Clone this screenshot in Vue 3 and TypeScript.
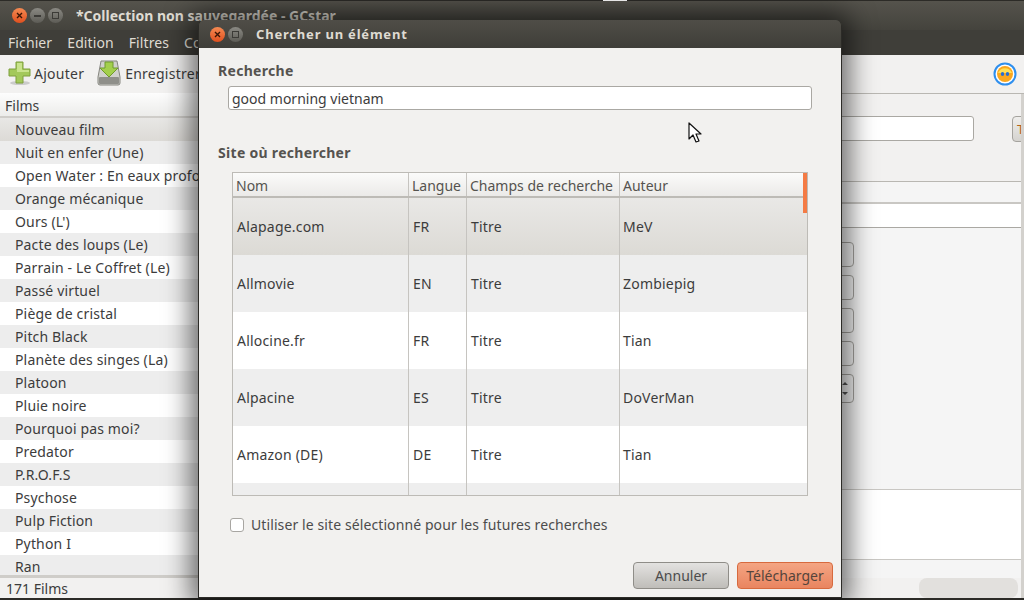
<script setup lang="ts">
const films: string[] = [
  'Nouveau film', 'Nuit en enfer (Une)', 'Open Water : En eaux profondes', 'Orange mécanique', "Ours (L')",
  'Pacte des loups (Le)', 'Parrain - Le Coffret (Le)', 'Passé virtuel', 'Piège de cristal', 'Pitch Black',
  'Planète des singes (La)', 'Platoon', 'Pluie noire', 'Pourquoi pas moi?', 'Predator',
  'P.R.O.F.S', 'Psychose', 'Pulp Fiction', 'Python I', 'Ran',
]
const sites = [
  { nom: 'Alapage.com', lang: 'FR', champ: 'Titre', auteur: 'MeV' },
  { nom: 'Allmovie', lang: 'EN', champ: 'Titre', auteur: 'Zombiepig' },
  { nom: 'Allocine.fr', lang: 'FR', champ: 'Titre', auteur: 'Tian' },
  { nom: 'Alpacine', lang: 'ES', champ: 'Titre', auteur: 'DoVerMan' },
  { nom: 'Amazon (DE)', lang: 'DE', champ: 'Titre', auteur: 'Tian' },
]
</script>

<template>
  <div class="screen">
    <div class="app">
      <header class="titlebar">
        <div class="wm">
          <span class="wbtn close">
            <svg width="7" height="7" viewBox="0 0 7 7"><path d="M1 1l5 5M6 1l-5 5" stroke="#3a1505" stroke-width="1.4" /></svg>
          </span>
          <span class="wbtn"><i class="minus"></i></span>
          <span class="wbtn"><i class="square"></i></span>
        </div>
        <span class="wtitle">*Collection non sauvegardée - GCstar</span>
        <span class="notch"></span>
      </header>
      <nav class="menubar">
        <span>Fichier</span><span>Edition</span><span>Filtres</span><span>Collection</span>
      </nav>
      <div class="toolbar">
        <span class="tool">
          <svg width="24" height="28" viewBox="0 0 24 28">
            <ellipse cx="12" cy="24" rx="10" ry="2" fill="#bbb" opacity=".7" />
            <path d="M8 3h7v7h7v7h-7v7H8v-7H1v-7h7z" fill="#a3c95a" stroke="#7f9f3c" />
            <path d="M9 4h5v7h7v2H9z" fill="#c9e38c" />
          </svg>
          Ajouter
        </span>
        <span class="tool second-tool">
          <svg width="24" height="26" viewBox="0 0 24 26">
            <path d="M4 1h16l3 16v6a2 2 0 0 1-2 2H3a2 2 0 0 1-2-2v-6z" fill="#d0d0cc" stroke="#85857f" />
            <rect x="2" y="17" width="20" height="7" rx="1" fill="#8f8f8a" />
            <path d="M8 2h8v6h5l-9 9-9-9h5z" fill="#a3cf4c" stroke="#6f9a2c" />
          </svg>
          Enregistrer
        </span>
        <svg class="smiley" width="24" height="24" viewBox="0 0 24 24">
          <circle cx="12" cy="12" r="10.5" fill="#fff" stroke="#2f8fee" stroke-width="2" />
          <circle cx="12" cy="12" r="8" fill="#fba71e" />
          <path d="M5 11a7.5 7.5 0 0 1 14 0z" fill="#ffdf55" />
          <ellipse cx="9.5" cy="12" rx="1.7" ry="2" fill="#2a6fd0" />
          <ellipse cx="14.5" cy="12" rx="1.7" ry="2" fill="#2a6fd0" />
        </svg>
      </div>
      <div class="main">
        <aside class="side">
          <div class="side-head">Films</div>
          <div class="rows">
            <div v-for="(f, i) in films" :key="f" class="film" :class="{ sel: i === 0, odd: i % 2 === 1 }">{{ f }}</div>
          </div>
          <div class="hbar"></div>
          <div class="status">171 Films</div>
        </aside>
        <section class="detail">
          <div class="pane">
            <div class="line-top">
              <span class="field f1"></span>
              <span class="small-btn">T</span>
            </div>
            <div class="band"></div>
            <div class="field-row"></div>
            <div class="stack">
              <span class="mini"></span><span class="mini"></span><span class="mini"></span><span class="mini"></span>
              <span class="mini tall">
                <svg width="6" height="14" viewBox="0 0 6 14"><path d="M0 3l3-3 3 3zM0 10h6l-3 3z" fill="#555" /></svg>
              </span>
            </div>
            <div class="textarea"></div>
            <div class="after"></div>
            <div class="thumb-row"><span class="thumb"></span></div>
          </div>
          <div class="vbar"></div>
        </section>
      </div>
      <div class="bottom"></div>
    </div>

    <div class="dialog">
      <header class="dtitle">
        <div class="wm small">
          <span class="wbtn close">
            <svg width="7" height="7" viewBox="0 0 7 7"><path d="M1 1l5 5M6 1l-5 5" stroke="#3a1505" stroke-width="1.4" /></svg>
          </span>
          <span class="wbtn"><i class="square"></i></span>
        </div>
        <span class="dname">Chercher un élément</span>
      </header>
      <div class="dbody">
        <h3 class="lab">Recherche</h3>
        <div class="search">good morning vietnam</div>
        <h3 class="lab second">Site où rechercher</h3>
        <div class="table">
          <div class="tr thead">
            <span class="c1">Nom</span><span class="c2">Langue</span><span class="c3">Champs de recherche</span><span class="c4">Auteur</span>
          </div>
          <div v-for="(s, i) in sites" :key="s.nom" class="tr row" :class="{ chosen: i === 0, alt: i % 2 === 1 }">
            <span class="c1">{{ s.nom }}</span><span class="c2">{{ s.lang }}</span><span class="c3">{{ s.champ }}</span><span class="c4">{{ s.auteur }}</span>
          </div>
          <div class="tr row alt stub"><span class="c1"></span><span class="c2"></span><span class="c3"></span><span class="c4"></span></div>
          <span class="tscroll"></span>
        </div>
        <label class="check"><span class="box"></span>Utiliser le site sélectionné pour les futures recherches</label>
        <div class="actions">
          <button class="btn">Annuler</button>
          <button class="btn primary">Télécharger</button>
        </div>
      </div>
    </div>

    <svg class="cursor" width="14" height="21" viewBox="0 0 14 21">
      <path d="M1 1v16l4-4 3 7 3-1-3-7h5z" fill="#fff" stroke="#111" stroke-width="1.2" stroke-linejoin="round" />
    </svg>
  </div>
</template>

<style>
html, body { margin: 0; background: #2c2b27; }
</style>

<style scoped>
.screen { position: relative; width: 1024px; height: 600px; overflow: hidden; font-family: "Noto Sans", "Open Sans", sans-serif; font-size: 14px; color: #3c3c3c; }
.app { display: flex; flex-direction: column; height: 600px; background: #f2f1f0; }
.titlebar { position: relative; height: 30px; box-sizing: border-box; display: flex; align-items: center; background: linear-gradient(#55534c, #44433d); border-top: 1px solid #2c2b27; padding-left: 12px; }
.notch { position: absolute; left: 603px; top: -1px; width: 24px; height: 1px; background: #fff; }
.wm { display: flex; gap: 3px; width: 64px; }
.wbtn { width: 15px; height: 15px; border-radius: 50%; background: linear-gradient(#8a8983, #5d5c56); display: flex; align-items: center; justify-content: center; }
.wbtn.close { background: linear-gradient(#f58a52, #e0501f); }
.wbtn .minus { width: 7px; height: 2px; background: #3c3b37; }
.wbtn .square { width: 5px; height: 5px; border: 1px solid #3c3b37; }
.wtitle { color: #dfdbd2; font-weight: 700; font-size: 14px; white-space: nowrap; }
.menubar { height: 25px; display: flex; align-items: center; gap: 15px; padding-left: 8px; background: #3f3e39; color: #dfdbd2; font-size: 14px; letter-spacing: .1px; }
.toolbar { height: 38px; box-sizing: border-box; padding: 0 0 2px 8px; display: flex; align-items: center; gap: 12px; background: #f2f1f0; }
.tool { display: flex; align-items: center; gap: 2px; white-space: nowrap; letter-spacing: .25px; }
.second-tool { gap: 4px; margin-left: 1px; }
.smiley { margin-left: auto; margin-right: 7px; margin-top: 2px; }
.main { flex: 1; display: flex; min-height: 0; }
.side { width: 250px; display: flex; flex-direction: column; flex: none; }
.side-head { height: 25px; box-sizing: border-box; padding-left: 5px; line-height: 25px; background: linear-gradient(#fdfdfd, #ececea); border-bottom: 2px solid #cfcdc9; }
.rows { flex: none; height: 457px; overflow: hidden; }
.film { height: 23px; line-height: 23px; padding-left: 15px; background: #fff; white-space: nowrap; letter-spacing: .15px; }
.film.odd { background: #ededed; }
.film.sel { background: linear-gradient(#e8e7e5, #dcdad6); }
.hbar { height: 3px; background: #cfcdc9; flex: none; }
.status { flex: 1; padding-left: 6px; line-height: 21px; background: #f2f1f0; }
.detail { flex: 1; display: flex; min-width: 0; border-top: 1px solid #b9b7b2; }
.pane { flex: 1; display: flex; flex-direction: column; background: #f5f5f5; min-width: 0; }
.line-top { height: 88px; background: #f2f1f0; box-sizing: border-box; padding-top: 22px; display: flex; align-items: flex-start; justify-content: flex-end; gap: 38px; border-bottom: 1px solid #b9b7b2; flex: none; }
.field { display: block; height: 25px; box-sizing: border-box; width: 320px; background: #fff; border: 1px solid #aaa8a3; border-radius: 3px; }
.small-btn { width: 14px; height: 26px; margin-right: -5px; box-sizing: border-box; border: 1px solid #a5a39e; border-radius: 4px 0 0 4px; background: linear-gradient(#efeeec, #d5d3cf); color: #b5651d; font-size: 13px; line-height: 24px; padding-left: 4px; overflow: hidden; }
.band { height: 22px; box-sizing: border-box; background: #f5f5f5; border-bottom: 2px solid #c9c7c3; flex: none; }
.field-row { height: 24px; box-sizing: border-box; background: #fff; border-bottom: 1px solid #aaa8a3; flex: none; }
.stack { height: 261px; flex: none; display: flex; flex-direction: column; align-items: flex-start; gap: 8px; padding: 14px 0 0 580px; box-sizing: border-box; }
.mini { width: 24px; height: 25px; box-sizing: border-box; border: 1px solid #a5a39e; border-radius: 4px; flex: none; display: flex; align-items: center; padding-left: 11px; }
.mini.tall { height: 29px; }
.textarea { height: 71px; box-sizing: border-box; background: #fff; border-top: 1px solid #c9c7c3; border-bottom: 1px solid #c9c7c3; flex: none; }
.after { height: 18px; flex: none; }
.thumb-row { flex: 1; display: flex; justify-content: flex-end; background: #f2f1f0; }
.thumb { width: 99px; height: 20px; margin-right: 3px; border-radius: 8px; background: #e2e0dd; }
.vbar { width: 3px; background: #d3d1cd; }
.bottom { height: 2px; background: #2c2b27; flex: none; }

.dialog { position: absolute; left: 198px; top: 20px; width: 644px; height: 578px; display: flex; flex-direction: column; border-radius: 6px 6px 0 0; box-shadow: 0 0 26px 8px rgba(0,0,0,.55); border: solid #2c2b27; border-width: 0 1px 1px; box-sizing: border-box; }
.dtitle { height: 28px; flex: none; display: flex; align-items: center; padding-left: 11px; background: linear-gradient(#4f4d47, #3f3e39); border-radius: 6px 6px 0 0; }
.wm.small { width: 46px; gap: 3px; }
.dname { color: #dfdbd2; font-weight: 700; font-size: 13px; letter-spacing: .8px; }
.dbody { flex: 1; background: #f2f1ef; display: flex; flex-direction: column; padding: 0 8px 8px 19px; min-height: 0; }
.lab { margin: 14px 0 0; font-size: 14px; letter-spacing: .3px; font-weight: 700; color: #55534f; line-height: 18px; }
.lab.second { margin-top: 34px; }
.search { margin: 6px 21px 0 10px; height: 24px; box-sizing: border-box; line-height: 24px; padding-left: 3px; background: #fff; border: 1px solid #aaa8a3; border-radius: 3px; }
.table { position: relative; margin: 10px 26px 0 14px; height: 324px; width: 576px; box-sizing: border-box; border: 1px solid #bdbbb6; background: #fff; overflow: hidden; flex: none; }
.tr { display: grid; grid-template-columns: 176px 58px 153px 1fr; }
.tr span { display: flex; align-items: center; border-right: 1px solid #c6c4c0; padding-left: 3px; white-space: nowrap; min-width: 0; }
.tr span:last-of-type { border-right: 0; }
.thead { height: 25px; background: linear-gradient(#fbfbfa, #ebeae8); border-bottom: 2px solid #bdbbb6; box-sizing: border-box; color: #55534f; font-size: 14px; }
.thead span { padding-top: 2px; box-sizing: border-box; }
.row { height: 57px; background: #fff; color: #3c3c3c; letter-spacing: .2px; }
.row span { padding-left: 4px; }
.row span.c4 { padding-left: 3px; }
.row.alt { background: #eeeeee; }
.row.chosen { background: linear-gradient(#e9e8e6, #dcdad5); }
.row.stub { height: 12px; }
.tscroll { position: absolute; right: 0; top: 0; width: 4px; height: 40px; background: #f47b45; padding: 0; border: 0; }
.check { display: flex; align-items: center; gap: 7px; margin: 19px 0 0 12px; font-size: 14px; letter-spacing: .1px; color: #4c4c4c; }
.box { width: 14px; height: 14px; box-sizing: border-box; background: #fff; border: 1px solid #a8a6a2; border-radius: 3px; }
.actions { margin-top: auto; display: flex; justify-content: flex-end; gap: 8px; }
.btn { width: 96px; height: 27px; box-sizing: border-box; border: 1px solid #8f8d88; border-radius: 4px; background: linear-gradient(#e3e2e0, #bfbdb9); font: inherit; color: #4c4c4c; padding: 0; }
.btn.primary { background: linear-gradient(#f4a583, #e98560); border-color: #d76a3e; color: #55453c; }
.cursor { position: absolute; left: 688px; top: 122px; }
</style>
